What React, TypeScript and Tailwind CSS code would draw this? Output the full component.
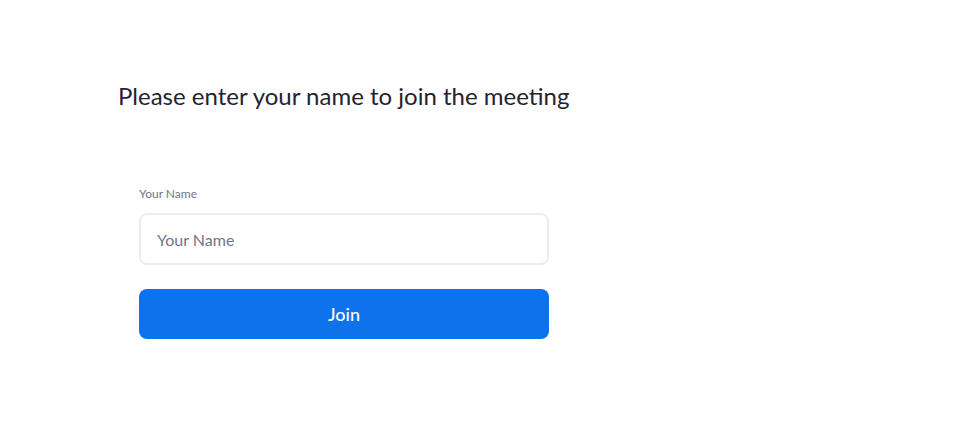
export default function App() {
  return (
    <div className="min-h-[421px] w-full bg-white font-['Lato','Noto_Sans',sans-serif]">
      <div className="pl-[118px] pt-[80px]">
        <h1 className="text-[24px] leading-[32px] text-[#232333]">
          Please enter your name to join the meeting
        </h1>
      </div>
      <form className="ml-[139px] mt-[75px] flex w-[410px] flex-col" onSubmit={(e) => e.preventDefault()}>
        <label htmlFor="name" className="text-[12px] leading-[14px] text-[#747487]">
          Your Name
        </label>
        <input
          id="name"
          type="text"
          placeholder="Your Name"
          className="mt-[12px] h-[52px] w-full rounded-[8px] border-2 border-[#ededf0] px-[16px] text-[16px] text-[#232333] outline-none placeholder:text-[#747487]"
        />
        <button
          type="submit"
          className="mt-[24px] h-[50px] w-full rounded-[8px] bg-[#0e72ed] text-[18px] font-medium text-white"
        >
          Join
        </button>
      </form>
    </div>
  );
}
